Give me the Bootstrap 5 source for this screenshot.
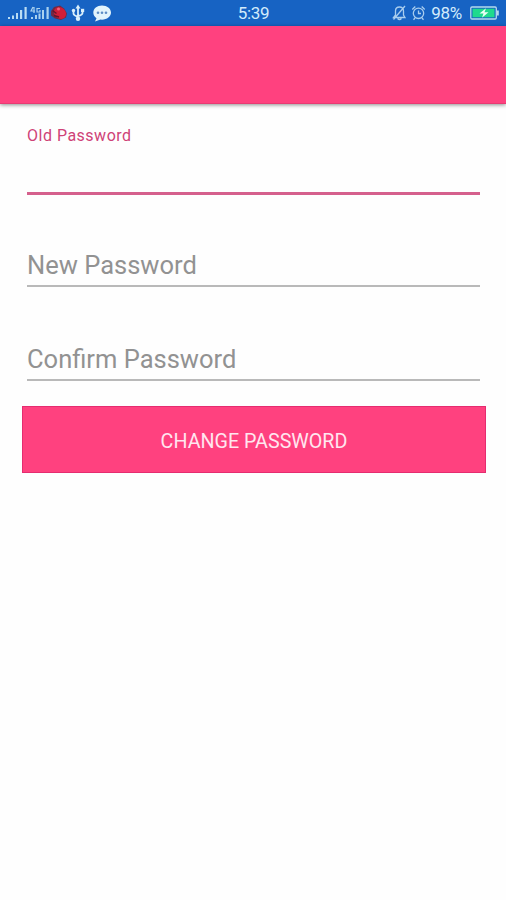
<!DOCTYPE html>
<html lang="en">
<head>
<meta charset="utf-8">
<meta name="viewport" content="width=device-width, initial-scale=1">
<title>Change Password</title>
<link href="https://cdn.jsdelivr.net/npm/bootstrap@5.3.0/dist/css/bootstrap.min.css" rel="stylesheet">
<style>
body { font-family: Roboto, "Liberation Sans", sans-serif; background: #fefefe; }
.status-bar { height: 26px; background: #1763c3; color: #d3ebfb; font-size: 17px; line-height: 26px; padding: 0 6px 0 7px; }
.status-bar svg { display: block; flex: none; }
.status-side { flex: 1 1 0; }
.status-time { letter-spacing: -.3px; }
.app-bar { height: 78px; background: #ff417f; border-bottom: 1px solid #e83a73; box-shadow: 0 1px 4px rgba(0,0,0,.45); }
.pw-form { padding: 0 20px 0 22px; }
.pw-field { margin: 0 6px 0 5px; }
.pw-field .form-control { border: 0; border-radius: 0; background: transparent; padding: 0; box-shadow: none; font-size: 25.5px; line-height: 36px; height: 42px; color: #444; border-bottom: 2px solid #b9b9b9; }
.pw-field .form-control::placeholder { color: #929292; opacity: 1; }
.pw-old { padding-top: 22px; }
.pw-old label { display: block; font-size: 16px; line-height: 20px; color: #cf4277; letter-spacing: .5px; }
.pw-old .form-control { height: 49px; border-bottom: 3px solid #d5608d; }
.pw-new { padding-top: 50px; }
.pw-confirm { padding-top: 52px; }
.btn-change { height: 67px; margin-top: 25px; background: #ff417f; color: #ffe6ef; border: 1px solid #e52c70; border-radius: 0; font-size: 19.7px; padding: 4px 0 0; }
.btn-change:hover { background: #f03675; color: #fff; }
</style>
<script src="https://cdn.jsdelivr.net/npm/bootstrap@5.3.0/dist/js/bootstrap.bundle.min.js"></script>
</head>
<body>
<div class="status-bar d-flex align-items-center">
  <div class="status-side d-flex align-items-center">
    <svg width="106" height="26" viewBox="7 0 106 26" aria-hidden="true">
      <!-- signal bars, first SIM -->
      <g fill="#b9dcf4"><path d="M8 17h2v2H8zM12 15.500h2V19h-2zM16 13h2v6h-2zM20 10h2.200v9H20zM24.500 7h2.200v12h-2.200z"/></g>
      <!-- signal bars, second SIM -->
      <g fill="#a9d1ef"><path d="M31 17h2v2h-2zM35 15h2v4h-2zM38.500 13.500h2V19h-2zM42 10h2v9h-2zM46.500 7h2.200v12h-2.200z"/></g>
      <path d="M33 7l-2 4h4M34 7v6M40 8.500h-3v3.500h3v-2" fill="none" stroke="#a9d1ef" stroke-width="1.200"/>
      <!-- red beetle -->
      <path d="M51 11l3-4 6-1.500 4 3 3 5-1 4-5 2.500-6-1.500-4-3z" fill="#6f2a45"/>
      <ellipse cx="60" cy="13" rx="6.500" ry="5.500" transform="rotate(40 60 13)" fill="#d01e38"/>
      <path d="M52.500 10.500l4 3M54 15.500l5 1.500" stroke="#64142c" stroke-width="1.500"/>
      <circle cx="58.500" cy="9" r="1.500" fill="#f0647b"/>
      <!-- usb -->
      <g fill="none" stroke="#d9effb" stroke-width="1.800"><path d="M78 7v11M73.500 10v3.500q0 2 4.500 3M82.500 10v3q0 2-4.500 3"/></g>
      <g fill="#d9effb"><path d="M75.500 8.500 78 4.500l2.500 4z"/><circle cx="73.500" cy="10.500" r="1.700"/><path d="M81 8.800h3.200V12H81z"/><circle cx="78" cy="18.800" r="2.200"/></g>
      <!-- message bubble -->
      <path d="M102 5.500c5 0 9 3.100 9 7.100s-4 7.100-9 7.100l-1.500-.1-5.500 1.800 1.500-3.200c-2-1.300-3.200-3.300-3.200-5.600 0-4 3.700-7.100 8.700-7.100z" fill="#e2f4fc"/>
      <g fill="#5d8dc5"><circle cx="98" cy="12.800" r="1.300"/><circle cx="102" cy="12.800" r="1.300"/><circle cx="106" cy="12.800" r="1.300"/></g>
    </svg>
  </div>
  <div class="status-time">5:39</div>
  <div class="status-side d-flex align-items-center justify-content-end">
    <svg width="36" height="26" viewBox="391 0 36 26" aria-hidden="true">
      <g fill="none" stroke="#a9cdee" stroke-width="1.300">
        <!-- muted bell -->
        <path d="M393.500 17.500h11.500l-1.500-2.500v-4c0-2.500-1.500-4-4-4s-4 1.500-4 4v4zM397.500 18.500q2 2 4 0M405 6l-11.500 13.500"/>
        <!-- alarm clock -->
        <circle cx="418.500" cy="13.300" r="5.200"/><path d="M418.500 10.500v3h2.500M412.300 9.500l3-3M421.700 6.500l3 3M415 18l-1.500 1.700M422 18l1.500 1.700"/>
      </g>
    </svg>
    <span class="ms-1 status-time">98%</span>
    <svg class="ms-2" width="30" height="26" viewBox="470 0 30 26" aria-hidden="true">
      <rect x="470.800" y="7" width="25.500" height="12" rx="1.200" fill="#1763c3" stroke="#b5dbed" stroke-width="1.300"/>
      <rect x="472.500" y="8.700" width="22" height="8.600" fill="#1fda8d"/>
      <path d="M497 10.500h1.800v5H497z" fill="#b5dbed"/>
      <path d="M486 8.300l-6.500 5.200h4l-1.500 4.200 6.500-5.500h-4z" fill="#eafff5"/>
    </svg>
  </div>
</div>
<header class="app-bar"></header>
<main>
  <form class="pw-form">
    <div class="pw-field pw-old">
      <label for="oldPassword">Old Password</label>
      <input id="oldPassword" type="password" class="form-control">
    </div>
    <div class="pw-field pw-new">
      <input type="password" class="form-control" placeholder="New Password" aria-label="New Password">
    </div>
    <div class="pw-field pw-confirm">
      <input type="password" class="form-control" placeholder="Confirm Password" aria-label="Confirm Password">
    </div>
    <button type="button" class="btn btn-change w-100 text-uppercase">Change Password</button>
  </form>
</main>
</body>
</html>
